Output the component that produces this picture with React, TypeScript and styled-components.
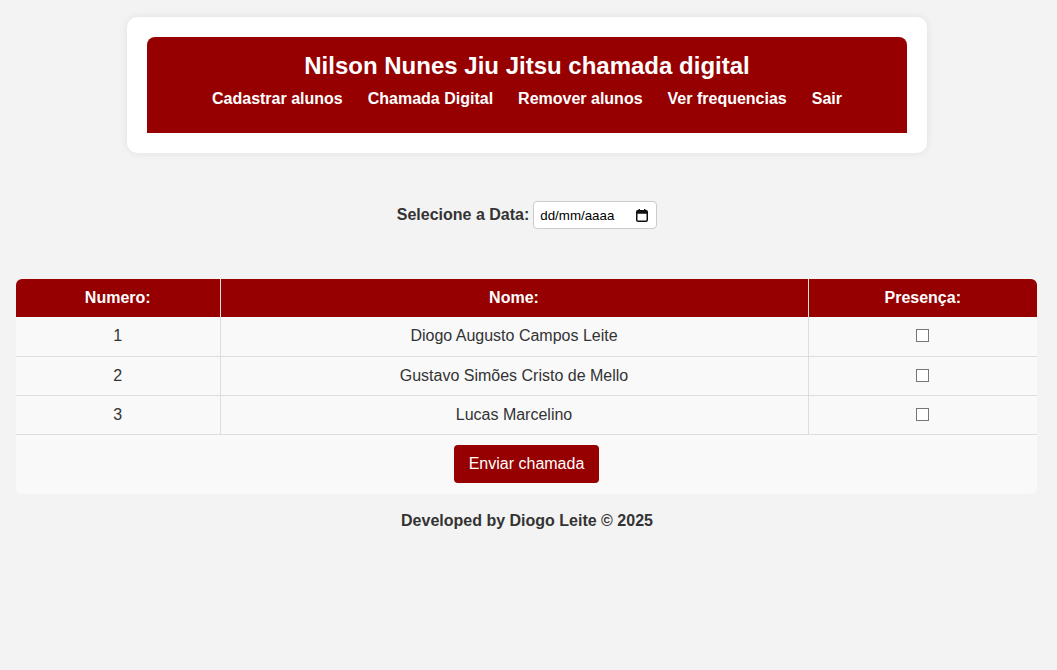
import React from "react";
import styled, { createGlobalStyle } from "styled-components";

const Global = createGlobalStyle`
  html, body { margin: 0; padding: 0; }
  body {
    background: #f3f3f3;
    font-family: "Liberation Sans", Arial, sans-serif;
    color: #333;
  }
`;

const Page = styled.div`
  display: flex;
  flex-direction: column;
  align-items: center;
  padding: 17px 3px 0 0;
`;

const HeaderCard = styled.header`
  width: 760px;
  padding: 20px;
  background: #fff;
  border-radius: 10px;
  box-shadow: 0 0 8px rgba(0, 0, 0, 0.08);
`;

const Banner = styled.div`
  background: #960000;
  border-radius: 8px 8px 0 0;
  padding: 15px 0 25px;
  display: flex;
  flex-direction: column;
  align-items: center;
  gap: 10px;
`;

const Title = styled.h1`
  margin: 0;
  font-size: 24px;
  line-height: 28px;
  font-weight: bold;
  color: #fff;
`;

const Nav = styled.nav`
  display: flex;
  gap: 25px;
`;

const NavLink = styled.a`
  color: #fff;
  font-weight: bold;
  font-size: 16px;
  line-height: 18px;
  text-decoration: none;
  cursor: pointer;
`;

const DateRow = styled.div`
  margin-top: 48px;
  display: flex;
  align-items: center;
  gap: 4px;
`;

const Label = styled.label`
  font-weight: bold;
  font-size: 16px;
  color: #333;
`;

const DateBox = styled.div`
  position: relative;
  width: 124px;
  height: 28px;
  box-sizing: border-box;
  border: 1px solid #ccc;
  border-radius: 4px;
  background: #fff;
  display: flex;
  align-items: center;
`;

const DateInput = styled.input`
  border: none;
  outline: none;
  background: transparent;
  width: 100%;
  padding: 0 0 0 6px;
  font-family: "Liberation Sans", Arial, sans-serif;
  font-size: 13.33px;
  color: #000;
  &::placeholder { color: #000; }
`;

const CalIcon = styled.svg`
  position: absolute;
  right: 8px;
  top: 7px;
`;

const Table = styled.table`
  align-self: flex-start;
  margin: 50px 0 0 16px;
  width: 1021px;
  border-collapse: collapse;
  background: #f9f9f9;
  border-radius: 6px;
  overflow: hidden;
  font-size: 16px;
`;

const Th = styled.th<{ $w?: number }>`
  background: #960000;
  color: #fff;
  font-weight: bold;
  height: 38px;
  padding: 0;
  box-sizing: border-box;
  border-left: 1px solid #e6e6e6;
  width: ${(p) => (p.$w ? `${p.$w}px` : "auto")};
  &:first-child { border-left: none; }
`;

const Td = styled.td`
  height: 39px;
  padding: 0;
  box-sizing: border-box;
  text-align: center;
  color: #333;
  border-bottom: 1px solid #ddd;
  border-left: 1px solid #ddd;
  &:first-child { border-left: none; }
`;

const ButtonCell = styled.td`
  text-align: center;
  padding: 10px 0 11px;
`;

const Check = styled.input`
  appearance: none;
  margin: 0;
  width: 13px;
  height: 13px;
  box-sizing: border-box;
  border: 1px solid #767676;
  background: #fff;
  border-radius: 0;
  vertical-align: -1px;
`;

const Button = styled.button`
  display: block;
  margin: 0 auto;
  background: #960000;
  color: #fff;
  border: none;
  border-radius: 4px;
  padding: 10px 15px;
  font-family: "Liberation Sans", Arial, sans-serif;
  font-size: 16px;
  line-height: 18px;
  cursor: pointer;
`;

const Footer = styled.footer`
  margin-top: 18px;
  font-weight: bold;
  font-size: 16px;
  color: #333;
`;

const alunos = [
  "Diogo Augusto Campos Leite",
  "Gustavo Simões Cristo de Mello",
  "Lucas Marcelino",
];

export default function App() {
  return (
    <>
      <Global />
      <Page>
        <HeaderCard>
          <Banner>
            <Title>Nilson Nunes Jiu Jitsu chamada digital</Title>
            <Nav>
              <NavLink>Cadastrar alunos</NavLink>
              <NavLink>Chamada Digital</NavLink>
              <NavLink>Remover alunos</NavLink>
              <NavLink>Ver frequencias</NavLink>
              <NavLink>Sair</NavLink>
            </Nav>
          </Banner>
        </HeaderCard>

        <DateRow>
          <Label>Selecione a Data:</Label>
          <DateBox>
            <DateInput type="text" placeholder="dd/mm/aaaa" />
            <CalIcon width="12" height="13" viewBox="0 0 12 13">
              <rect x="0.75" y="1.75" width="10.5" height="10.5" rx="1.2" fill="none" stroke="#111" strokeWidth="1.5" />
              <rect x="0.75" y="1.75" width="10.5" height="3" fill="#111" />
              <rect x="2.5" y="0" width="1.5" height="2.5" fill="#111" />
              <rect x="8" y="0" width="1.5" height="2.5" fill="#111" />
            </CalIcon>
          </DateBox>
        </DateRow>

        <Table>
          <thead>
            <tr>
              <Th $w={204}>Numero:</Th>
              <Th>Nome:</Th>
              <Th $w={229}>Presença:</Th>
            </tr>
          </thead>
          <tbody>
            {alunos.map((nome, i) => (
              <tr key={nome}>
                <Td>{i + 1}</Td>
                <Td>{nome}</Td>
                <Td>
                  <Check type="checkbox" />
                </Td>
              </tr>
            ))}
            <tr>
              <ButtonCell colSpan={3}>
                <Button>Enviar chamada</Button>
              </ButtonCell>
            </tr>
          </tbody>
        </Table>

        <Footer>Developed by Diogo Leite © 2025</Footer>
      </Page>
    </>
  );
}
